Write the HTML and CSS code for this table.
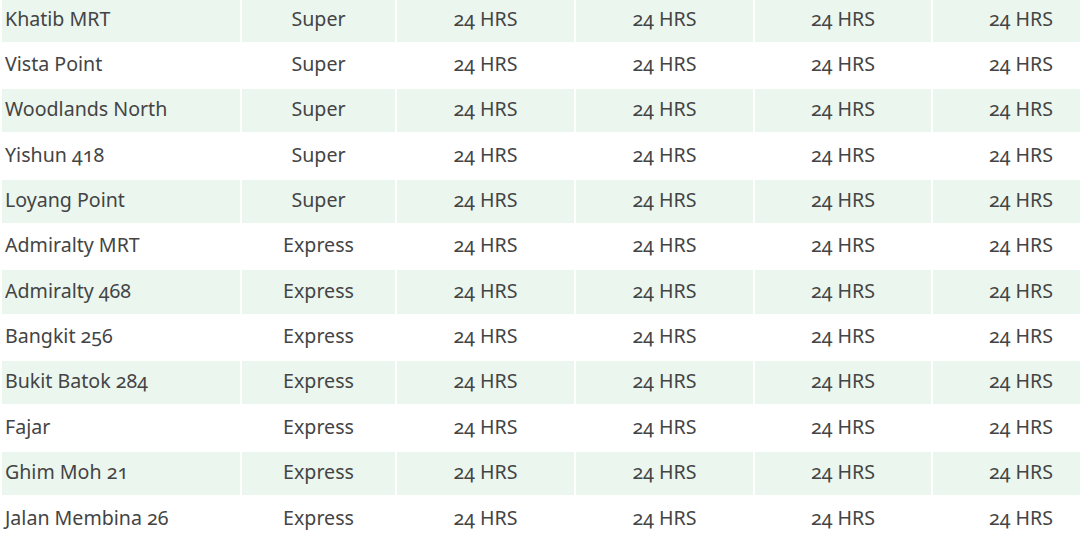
FILE: index.html
```html
<!DOCTYPE html>
<html>
<head>
<meta charset="utf-8">
<link rel="stylesheet" href="styles.css">
</head>
<body>
<div class="frame">
<table class="hours">
<tbody>
<tr class="alt"><td class="name">Khatib MRT</td><td>Super</td><td>24 HRS</td><td>24 HRS</td><td>24 HRS</td><td>24 HRS</td></tr>
<tr><td class="name">Vista Point</td><td>Super</td><td>24 HRS</td><td>24 HRS</td><td>24 HRS</td><td>24 HRS</td></tr>
<tr class="alt"><td class="name">Woodlands North</td><td>Super</td><td>24 HRS</td><td>24 HRS</td><td>24 HRS</td><td>24 HRS</td></tr>
<tr><td class="name">Yishun 418</td><td>Super</td><td>24 HRS</td><td>24 HRS</td><td>24 HRS</td><td>24 HRS</td></tr>
<tr class="alt"><td class="name">Loyang Point</td><td>Super</td><td>24 HRS</td><td>24 HRS</td><td>24 HRS</td><td>24 HRS</td></tr>
<tr><td class="name">Admiralty MRT</td><td>Express</td><td>24 HRS</td><td>24 HRS</td><td>24 HRS</td><td>24 HRS</td></tr>
<tr class="alt"><td class="name">Admiralty 468</td><td>Express</td><td>24 HRS</td><td>24 HRS</td><td>24 HRS</td><td>24 HRS</td></tr>
<tr><td class="name">Bangkit 256</td><td>Express</td><td>24 HRS</td><td>24 HRS</td><td>24 HRS</td><td>24 HRS</td></tr>
<tr class="alt"><td class="name">Bukit Batok 284</td><td>Express</td><td>24 HRS</td><td>24 HRS</td><td>24 HRS</td><td>24 HRS</td></tr>
<tr><td class="name">Fajar</td><td>Express</td><td>24 HRS</td><td>24 HRS</td><td>24 HRS</td><td>24 HRS</td></tr>
<tr class="alt"><td class="name">Ghim Moh 21</td><td>Express</td><td>24 HRS</td><td>24 HRS</td><td>24 HRS</td><td>24 HRS</td></tr>
<tr><td class="name">Jalan Membina 26</td><td>Express</td><td>24 HRS</td><td>24 HRS</td><td>24 HRS</td><td>24 HRS</td></tr>
</tbody>
</table>
</div>
</body>
</html>
```

FILE: styles.css
```css
html, body {
  margin: 0;
  padding: 0;
  background: #ffffff;
  overflow: hidden;
}

.frame {
  width: 1080px;
  height: 540px;
  overflow: hidden;
}

.hours {
  border-collapse: separate;
  border-spacing: 2px;
  table-layout: fixed;
  width: 1111px;
  margin-top: -3.8px;
  font-family: "Noto Sans", sans-serif;
  font-size: 19.6px;
  font-weight: 400;
  color: #444444;
  font-variant-numeric: oldstyle-nums;
}

.hours td {
  height: 43.36px;
  padding: 0 0 3px 0;
  text-align: center;
  vertical-align: middle;
  line-height: 1;
  box-sizing: border-box;
}

.hours td:nth-child(1) { width: 238px; }
.hours td:nth-child(2) { width: 153px; }
.hours td:nth-child(3) { width: 177px; }
.hours td:nth-child(4) { width: 177px; }
.hours td:nth-child(5) { width: 176px; }
.hours td:nth-child(6) { width: 176px; }

.hours td.name {
  text-align: left;
  padding-left: 3px;
}

.hours tr.alt td {
  background: #ebf6ef;
}
```
